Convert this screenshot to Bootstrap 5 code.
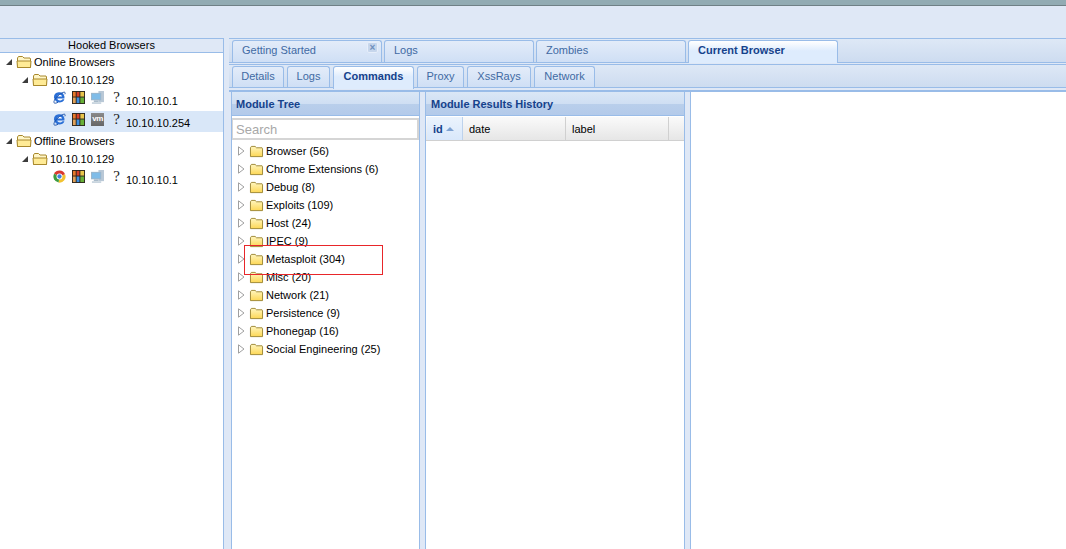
<!DOCTYPE html>
<html lang="en">
<head>
  <meta charset="UTF-8">
  <meta name="viewport" content="width=device-width, initial-scale=1.0">
  <title>BeEF Control Panel</title>
  <link href="https://cdn.jsdelivr.net/npm/bootstrap@5.3.0/dist/css/bootstrap.min.css" rel="stylesheet">
  <style>
    html, body { height: 100%; overflow: hidden; }
    body { background: #dfe8f6; font: 11px/14px "Liberation Sans", Arial, sans-serif; color: #000; }
    svg { display: block; flex: none; }

    .top-strip { height: 6px; background: #92abb3; border-bottom: 1px solid #6f8086; }
    .head-gap { height: 32px; }
    .main-area { height: 511px; }

    .hooked-panel { width: 224px; border-right: 1px solid #99bce8; background: #fff; border-top: 1px solid #99bce8; flex: none; }
    .hooked-title { height: 14px; line-height: 13px; background: #dfe8f6; border-bottom: 1px solid #99bce8; text-align: center; }
    .hook-row { height: 18px; }
    .hook-row.leaf { height: 21px; padding-top: 2px; }
    .hook-row.leaf.first-leaf { height: 22px; }
    .hook-row.picked { background: #d9e7f8; }
    .pad-1 { padding-left: 5px; }
    .pad-2 { padding-left: 21px; }
    .pad-3 { padding-left: 53px; }
    .arrow-open { margin-right: 3px; }
    .fold-big { margin-right: 2px; }
    .ico-gap { margin-right: 6px; }
    .vm-box { width: 13px; height: 13px; background: linear-gradient(#8a8a8a, #666); color: #fff; font-size: 8px; line-height: 12px; font-weight: 700; text-align: center; letter-spacing: -.5px; margin-right: 6px; }
    .what { width: 13px; font: 15px/13px "Liberation Serif", serif; color: #222; text-align: center; margin-right: 3px; }
    .leaf-ip { padding-top: 3px; }

    .work-side { width: 837px; margin-left: 5px; }
    .strip { background: linear-gradient(#dee8f6, #cddcf0); border-top: 1px solid #99bce8; border-bottom: 1px solid #99bce8; }
    .strip-top { height: 25px; padding: 1px 0 0 3px; }
    .strip-sub { height: 24px; padding: 1px 0 0 3px; margin-top: 1px; }
    .tabby { background: linear-gradient(#e3ecf9, #cfdff5); border: 1px solid #99bce8; border-bottom: 0; border-radius: 3px 3px 0 0; color: #416aa3; flex: none; margin-right: 2px; padding-left: 9px; line-height: 18px; position: relative; }
    .strip-sub .tabby { margin-right: 3px; line-height: 19px; text-align: center; padding-left: 0; }
    .tabby.on { background: linear-gradient(#fff, #deecfd 45%); color: #15428b; font-weight: 700; height: 23px; }
    .close-x { position: absolute; right: 3px; top: 1px; width: 11px; height: 11px; background: #c6d6ec; border: 1px solid #e6eefa; border-radius: 2px; color: #6f8fbc; font: 700 10px/9px "Liberation Sans", sans-serif; text-align: center; }
    .w-gs { width: 150px; } .w-lg { width: 150px; } .w-zo { width: 150px; } .w-cb { width: 150px; }
    .w-de { width: 52px; } .w-l2 { width: 43px; } .w-co { width: 81px; } .w-pr { width: 47px; } .w-xs { width: 64px; } .w-ne { width: 61px; }

    .split-row { height: 459px; border-top: 2px solid #99bce8; margin-top: 2px; }
    .edge-pad { width: 2px; flex: none; }
    .pane { border: 1px solid #99bce8; border-top: 0; border-bottom: 0; background: #fff; flex: none; }
    .pane-tree { width: 189px; }
    .pane-hist { width: 260px; }
    .gutter { width: 5px; flex: none; }
    .pane-head { height: 24px; background: linear-gradient(#dae7f6 0, #cfdff3 50%, #b9cfeb 52%, #b3caea 100%); color: #15428b; font-weight: 700; padding: 5px 0 0 4px; border-bottom: 1px solid #99bce8; }
    .pane-hist .pane-head { padding-left: 5px; }
    .search-wrap { padding: 2px 0 0 0; }
    .search-field { display: block; width: 100%; height: 22px; border: 1px solid #d5d5d5; border-width: 2px 2px 2px 1px; padding: 1px 3px 0; font: 13px "Liberation Sans", sans-serif; outline: 0; }
    .search-field::placeholder { color: #a8a8a8; opacity: 1; }
    .mod-tree { padding-top: 2px; position: relative; }
    .mod-row { height: 18px; padding-left: 5px; }
    .arrow-shut { margin-right: 4px; }
    .fold-small { margin-right: 2px; }
    .red-mark { position: absolute; left: 12px; top: 105px; width: 139px; height: 30px; border: 1px solid #e8262a; }

    .col-heads { height: 24px; margin-top: 1px; padding-left: 1px; background: linear-gradient(#fafafa, #e6e6e6); border-bottom: 1px solid #d0d0d0; }
    .col-cell { padding: 5px 0 0 6px; border-right: 1px solid #d0d0d0; flex: none; }
    .col-id { width: 36px; background: linear-gradient(#ebf3fd, #d9e8fb); color: #15428b; font-weight: 700; border-right-color: #bdd2ec; }
    .col-date { width: 103px; }
    .col-label { width: 103px; }
    .sort-up { display: inline-block; border: 4px solid transparent; border-bottom: 4px solid #7fa3d3; border-top: 0; margin-left: 3px; vertical-align: 2px; }
    .blank-pane { flex: 1; background: #fff; border-left: 1px solid #99bce8; }
  </style>
</head>
<body>

<svg width="0" height="0" class="position-absolute">
  <defs>
    <linearGradient id="fold-fill" x1="0" y1="0" x2="0" y2="1">
      <stop offset="0" stop-color="#fff6bf"/><stop offset="1" stop-color="#fdd755"/>
    </linearGradient>
  </defs>
  <symbol id="fold-open" viewBox="0 0 16 14">
    <path d="M1.500 12.500V3l1-1.500h4L8 3h6l.5 1V12.500z" fill="#fff6c8" stroke="#a8882c"/>
    <path d="M1.500 12.500L1 6h14l-.5 6.500z" fill="#ffeb96" stroke="#a8882c"/>
  </symbol>
  <symbol id="fold-shut" viewBox="0 0 16 14">
    <path d="M1.500 12.500V3l1-1.500h4L8 3h6l.5 1v8.500z" fill="url(#fold-fill)" stroke="#9a8430"/>
  </symbol>
  <symbol id="ie-ico" viewBox="0 0 14 14">
    <path d="M1 7a5.700 5.700 0 0 1 11.300-1v2H4.600c.3 2.400 3.900 2.900 5.700.8h2c-1.500 4.700-10 5.400-11.300-1.800z" fill="#2a6fd6"/>
    <path d="M4.600 5.800h5.200c-.5-2.400-4.600-2.400-5.200 0z" fill="#fff"/>
    <path d="M1 12.500C.5 10 5 4 11 1.500c2-.8 2.500.5 1.800 2M1 12.500c.8 1.200 3 .5 4.500-.5" fill="none" stroke="#1a4fa8"/>
  </symbol>
  <symbol id="win-ico" viewBox="0 0 14 14">
    <path d="M0 0h14v14H0z" fill="#2c2620"/>
    <path d="M1 1h3v5H1z" fill="#e8792a"/><path d="M5 1h3v5H5z" fill="#d8402a"/><path d="M9 1h4v5H9z" fill="#e9c44a"/>
    <path d="M1 7h3v6H1z" fill="#e0a25a"/><path d="M5 7h3v6H5z" fill="#3d8fe0"/><path d="M9 7h4v6H9z" fill="#68b038"/>
  </symbol>
  <symbol id="pc-ico" viewBox="0 0 14 14">
    <path d="M8 0h6v12H8z" fill="#b9c8d6"/>
    <path d="M0 2h11v8H0z" fill="#9db6cb"/><path d="M1 3h9v6H1z" fill="#7fbce8"/>
    <path d="M3 10h5v2H3z" fill="#a9bbca"/><path d="M1 12h10v2H1z" fill="#c9d5df"/>
  </symbol>
  <symbol id="chrome-ico" viewBox="0 0 14 14">
    <path d="M7 7L1.200 4A6.500 6.500 0 0 1 13 4.500z" fill="#d8392f"/>
    <path d="M7 7L13 4.500A6.500 6.500 0 0 1 6 13.500z" fill="#f2c230"/>
    <path d="M7 7L6 13.500A6.500 6.500 0 0 1 1.200 4z" fill="#3d9a3f"/>
    <circle cx="7" cy="7" r="3.200" fill="#fff"/><circle cx="7" cy="7" r="2.300" fill="#3f80dc"/>
  </symbol>
  <symbol id="tri-open" viewBox="0 0 8 8"><path d="M1 7h6V1z" fill="#3c3c3c"/></symbol>
  <symbol id="tri-shut" viewBox="0 0 8 10"><path d="M1.500 .8v8.400L7 5z" fill="#fff" stroke="#a0a0a0"/></symbol>
</svg>

<div class="top-strip"></div>
<div class="head-gap"></div>

<div class="main-area d-flex">
  <div class="hooked-panel">
    <div class="hooked-title">Hooked Browsers</div>
    <div class="hook-row pad-1 d-flex align-items-center"><svg class="arrow-open" width="8" height="8"><use href="#tri-open"/></svg><svg class="fold-big" width="16" height="14"><use href="#fold-open"/></svg>Online Browsers</div>
    <div class="hook-row pad-2 d-flex align-items-center"><svg class="arrow-open" width="8" height="8"><use href="#tri-open"/></svg><svg class="fold-big" width="16" height="14"><use href="#fold-open"/></svg>10.10.10.129</div>
    <div class="hook-row leaf first-leaf pad-3 d-flex align-items-start">
      <svg class="ico-gap" width="13" height="13"><use href="#ie-ico"/></svg>
      <svg class="ico-gap" width="13" height="13"><use href="#win-ico"/></svg>
      <svg class="ico-gap" width="13" height="13"><use href="#pc-ico"/></svg>
      <span class="what">?</span><span class="leaf-ip">10.10.10.1</span>
    </div>
    <div class="hook-row leaf picked pad-3 d-flex align-items-start">
      <svg class="ico-gap" width="13" height="13"><use href="#ie-ico"/></svg>
      <svg class="ico-gap" width="13" height="13"><use href="#win-ico"/></svg>
      <span class="vm-box">vm</span>
      <span class="what">?</span><span class="leaf-ip">10.10.10.254</span>
    </div>
    <div class="hook-row pad-1 d-flex align-items-center"><svg class="arrow-open" width="8" height="8"><use href="#tri-open"/></svg><svg class="fold-big" width="16" height="14"><use href="#fold-open"/></svg>Offline Browsers</div>
    <div class="hook-row pad-2 d-flex align-items-center"><svg class="arrow-open" width="8" height="8"><use href="#tri-open"/></svg><svg class="fold-big" width="16" height="14"><use href="#fold-open"/></svg>10.10.10.129</div>
    <div class="hook-row leaf pad-3 d-flex align-items-start">
      <svg class="ico-gap" width="13" height="13"><use href="#chrome-ico"/></svg>
      <svg class="ico-gap" width="13" height="13"><use href="#win-ico"/></svg>
      <svg class="ico-gap" width="13" height="13"><use href="#pc-ico"/></svg>
      <span class="what">?</span><span class="leaf-ip">10.10.10.1</span>
    </div>
  </div>

  <div class="work-side d-flex flex-column">
    <div class="strip strip-top d-flex">
      <div class="tabby w-gs">Getting Started<span class="close-x">×</span></div>
      <div class="tabby w-lg">Logs</div>
      <div class="tabby w-zo">Zombies</div>
      <div class="tabby on w-cb">Current Browser</div>
    </div>
    <div class="strip strip-sub d-flex">
      <div class="tabby w-de">Details</div>
      <div class="tabby w-l2">Logs</div>
      <div class="tabby on w-co">Commands</div>
      <div class="tabby w-pr">Proxy</div>
      <div class="tabby w-xs">XssRays</div>
      <div class="tabby w-ne">Network</div>
    </div>

    <div class="split-row d-flex">
      <div class="edge-pad"></div>
      <div class="pane pane-tree">
        <div class="pane-head">Module Tree</div>
        <div class="search-wrap"><input class="search-field" placeholder="Search"></div>
        <div class="mod-tree" id="modTree"></div>
      </div>
      <div class="gutter"></div>
      <div class="pane pane-hist">
        <div class="pane-head">Module Results History</div>
        <div class="col-heads d-flex">
          <div class="col-cell col-id">id<span class="sort-up"></span></div>
          <div class="col-cell col-date">date</div>
          <div class="col-cell col-label">label</div>
        </div>
      </div>
      <div class="gutter"></div>
      <div class="blank-pane"></div>
    </div>
  </div>
</div>

<script>
  const modules = ['Browser (56)', 'Chrome Extensions (6)', 'Debug (8)', 'Exploits (109)', 'Host (24)', 'IPEC (9)',
    'Metasploit (304)', 'Misc (20)', 'Network (21)', 'Persistence (9)', 'Phonegap (16)', 'Social Engineering (25)'];
  const tree = document.getElementById('modTree');
  tree.innerHTML = modules.map(name => `
    <div class="mod-row d-flex align-items-center">
      <svg class="arrow-shut" width="8" height="10"><use href="#tri-shut"/></svg>
      <svg class="fold-small" width="15" height="13"><use href="#fold-shut"/></svg>${name}
    </div>`).join('') + '<div class="red-mark"></div>';
</script>
<script src="https://cdn.jsdelivr.net/npm/bootstrap@5.3.0/dist/js/bootstrap.bundle.min.js"></script>
</body>
</html>
